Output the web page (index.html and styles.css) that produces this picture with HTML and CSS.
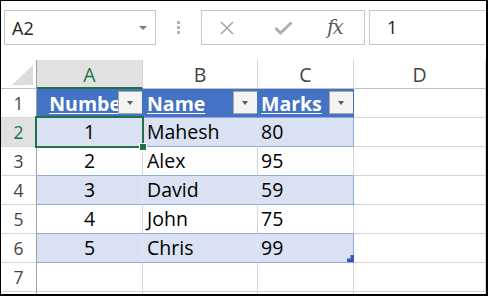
FILE: index.html
```html
<!DOCTYPE html>
<html lang="en">

<head>
    <meta charset="UTF-8">
    <meta name="viewport" content="width=device-width, initial-scale=1.0">
    <link rel="stylesheet" href="styles.css">
    <title>Excel table</title>
</head>

<body>
    <div class="window">
        <!-- Barra de fórmulas -->
        <div class="formula-bar">
            <div class="name-box">
                <span>A2</span>
                <span class="caret"></span>
            </div>
            <div class="grip"><i></i><i></i><i></i></div>
            <div class="fx-buttons">
                <svg class="ic-cancel" width="14" height="14" viewBox="0 0 14 14">
                    <path d="M1 1 L13 13 M13 1 L1 13" stroke="#a8a8a8" stroke-width="1.6" fill="none" />
                </svg>
                <svg class="ic-enter" width="19" height="14" viewBox="0 0 19 14">
                    <path d="M1.5 7 L6.5 12 L17.5 1.5" stroke="#adadad" stroke-width="2.8" fill="none" />
                </svg>
                <span class="fx">fx</span>
            </div>
            <div class="formula-input">1</div>
        </div>

        <!-- Hoja -->
        <div class="sheet">
            <div class="row col-heads">
                <div class="rh corner">
                    <svg width="22" height="20" viewBox="0 0 22 20">
                        <polygon points="21,0 21,20 0,20" fill="#dcdcdc" />
                    </svg>
                </div>
                <div class="cell a selected">A</div>
                <div class="cell b">B</div>
                <div class="cell c">C</div>
                <div class="cell d">D</div>
            </div>

            <div class="row thead">
                <div class="rh">1</div>
                <div class="cell a center"><span class="title">Number</span><span class="filter"></span></div>
                <div class="cell b"><span class="title">Name</span><span class="filter"></span></div>
                <div class="cell c"><span class="title">Marks</span><span class="filter"></span></div>
                <div class="cell d"></div>
            </div>

            <div class="row band">
                <div class="rh active">2</div>
                <div class="cell a center">1</div>
                <div class="cell b">Mahesh</div>
                <div class="cell c">80</div>
                <div class="cell d"></div>
            </div>
            <div class="row plain">
                <div class="rh">3</div>
                <div class="cell a center">2</div>
                <div class="cell b">Alex</div>
                <div class="cell c">95</div>
                <div class="cell d"></div>
            </div>
            <div class="row band">
                <div class="rh">4</div>
                <div class="cell a center">3</div>
                <div class="cell b">David</div>
                <div class="cell c">59</div>
                <div class="cell d"></div>
            </div>
            <div class="row plain">
                <div class="rh">5</div>
                <div class="cell a center">4</div>
                <div class="cell b">John</div>
                <div class="cell c">75</div>
                <div class="cell d"></div>
            </div>
            <div class="row band">
                <div class="rh">6</div>
                <div class="cell a center">5</div>
                <div class="cell b">Chris</div>
                <div class="cell c">99</div>
                <div class="cell d"></div>
            </div>
            <div class="row">
                <div class="rh">7</div>
                <div class="cell a"></div>
                <div class="cell b"></div>
                <div class="cell c"></div>
                <div class="cell d"></div>
            </div>
            <div class="row">
                <div class="rh"></div>
                <div class="cell a"></div>
                <div class="cell b"></div>
                <div class="cell c"></div>
                <div class="cell d"></div>
            </div>

            <!-- Celda activa y tirador de la tabla -->
            <div class="selection"><span class="fill-handle"></span></div>
            <svg class="resize-handle" width="7" height="7" viewBox="0 0 7 7">
                <polygon points="0,7 7,7 7,0 3.5,0 3.5,3.5 0,3.5" fill="#4155b8" />
            </svg>
        </div>
    </div>
</body>

</html>
```

FILE: styles.css
```css
/* General */
body {
    margin: 0;
    font-family: 'Open Sans', 'Noto Sans', sans-serif;
    color: #000;
}

.window {
    width: 488px;
    height: 296px;
    box-sizing: border-box;
    border: 1px solid #000;
    border-right-width: 2px;
    border-bottom-width: 2px;
    background: #fff;
    overflow: hidden;
}

/* Barra de fórmulas */
.formula-bar {
    display: flex;
    align-items: flex-start;
    height: 59px;
    padding-top: 9px;
    box-sizing: border-box;
}

.name-box {
    display: flex;
    align-items: center;
    width: 152px;
    height: 35px;
    margin-left: 3px;
    box-sizing: border-box;
    border: 1px solid #c6c6c6;
    padding-left: 7px;
    font-size: 18px;
    color: #222;
}

.caret {
    margin-left: auto;
    margin-right: 8px;
    border-left: 4px solid transparent;
    border-right: 4px solid transparent;
    border-top: 4px solid #7a7a7a;
}

.grip {
    display: flex;
    flex-direction: column;
    align-items: center;
    gap: 2px;
    width: 45px;
    padding-top: 11px;
}

.grip i {
    width: 3px;
    height: 3px;
    background: #b4b4b4;
}

.fx-buttons {
    display: flex;
    align-items: center;
    width: 164px;
    height: 35px;
    box-sizing: border-box;
    border: 1px solid #c6c6c6;
    padding-left: 18px;
}

.ic-enter {
    margin-left: 40px;
}

.fx {
    margin-left: 34px;
    margin-top: -2px;
    font-family: 'DejaVu Serif', 'Liberation Serif', serif;
    font-style: italic;
    font-size: 20px;
    color: #5e5e5e;
    letter-spacing: -2px;
}

.formula-input {
    flex: 1;
    height: 35px;
    margin-left: 4px;
    box-sizing: border-box;
    border: 1px solid #c6c6c6;
    border-right: none;
    padding-left: 17px;
    font-size: 18px;
    line-height: 33px;
    color: #222;
}

/* Hoja */
.sheet {
    position: relative;
}

.row {
    display: flex;
    height: 29px;
}

.rh,
.cell {
    box-sizing: border-box;
    height: 29px;
    border-bottom: 1px solid #d4d4d4;
    line-height: 28px;
    white-space: nowrap;
    overflow: hidden;
}

.rh {
    width: 36px;
    border-right: 1px solid #a0a0a0;
    text-align: center;
    font-size: 17.5px;
    color: #444;
}

.rh.active {
    background: #e1e1e1;
    color: #217346;
}

.cell {
    position: relative;
    border-right: 1px solid #d4d4d4;
    padding-left: 4px;
    font-size: 19.5px;
}

.cell.a { width: 106px; }
.cell.b { width: 115px; }
.cell.c { width: 96px; padding-left: 3px; }
.cell.d { width: 132px; }

.center {
    text-align: center;
    padding-left: 0;
}

/* Encabezados de columna */
.col-heads .cell {
    padding-left: 0;
    text-align: center;
    line-height: 30px;
    color: #444;
    border-bottom-color: #c0c0c0;
}

.col-heads .cell.selected {
    background: #e1e1e1;
    color: #217346;
    border-bottom: 2px solid #217346;
}

.corner {
    display: flex;
    align-items: flex-end;
    justify-content: flex-end;
    padding: 0 2px 3px 0;
    border-bottom-color: #c0c0c0;
}

/* Tabla */
.thead .cell.a,
.thead .cell.b,
.thead .cell.c {
    background: #4472c4;
    border-right-color: #4472c4;
    border-bottom-color: #8ea9db;
    color: #fff;
    font-weight: 700;
    line-height: 30px;
}

.title {
    text-decoration: underline;
    text-underline-offset: 2px;
}

.filter {
    position: absolute;
    right: -1px;
    top: 2px;
    width: 25px;
    height: 23px;
    box-sizing: border-box;
    background: #f3f3f3;
    border: 1px solid #a9a9a9;
}

.filter::after {
    content: "";
    position: absolute;
    left: 8px;
    top: 9px;
    border-left: 3.5px solid transparent;
    border-right: 3.5px solid transparent;
    border-top: 4px solid #5a5a5a;
}

.band .cell.a,
.band .cell.b,
.band .cell.c {
    background: #d9e1f2;
    border-right-color: #dfe6f4;
    border-bottom-color: #8ea9db;
}

.band .cell.c {
    border-right-color: #8ea9db;
}

.plain .cell.a,
.plain .cell.b,
.plain .cell.c {
    border-bottom-color: #8ea9db;
}

/* Selección */
.selection {
    position: absolute;
    left: 34px;
    top: 56px;
    width: 109px;
    height: 32px;
    box-sizing: border-box;
    border: 2px solid #217346;
}

.fill-handle {
    position: absolute;
    right: -5px;
    bottom: -5px;
    width: 8px;
    height: 8px;
    box-sizing: border-box;
    background: #217346;
    border: 1px solid #fff;
}

.resize-handle {
    position: absolute;
    left: 346px;
    top: 195px;
}
```
